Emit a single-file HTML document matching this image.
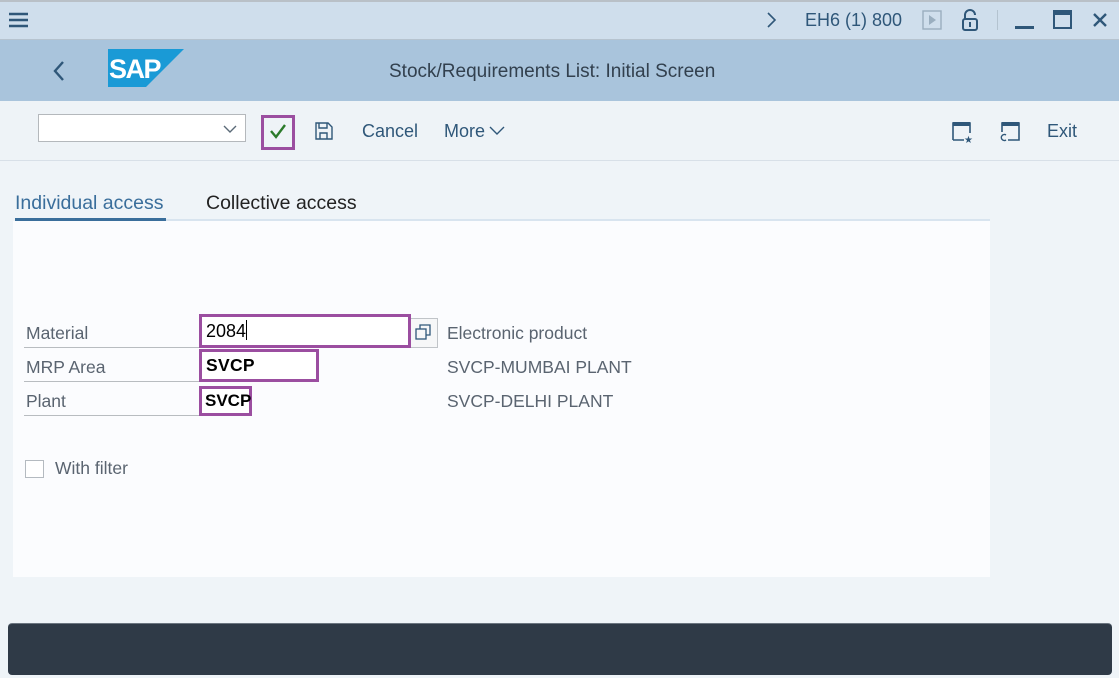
<!DOCTYPE html>
<html><head><style>
*{margin:0;padding:0;box-sizing:border-box}
body{width:1119px;height:678px;background:#eff4f8;font-family:"Liberation Sans",sans-serif;position:relative;overflow:hidden;color:#32363a}
.a{position:absolute}
.t{font-size:17px;color:#32363a;white-space:nowrap}
.lbl{font-size:17.5px;color:#5a6470;white-space:nowrap}
.in{position:absolute;border:3px solid #9b4ea0;background:#fff;font-size:17px;color:#000;padding-left:4px;line-height:25px}
.ul{position:absolute;height:1px;background:#b8bcc0}
</style></head><body>
<div class="a" style="left:0;top:0;width:1119px;height:40px;background:#cfdeec;border-top:2px solid #b9c0c7;border-bottom:1px solid #b6c3cf"></div>
<svg class="a" style="left:8px;top:12px" width="22" height="16"><path d="M1 2h19M1 8h19M1 14h19" stroke="#2f5779" stroke-width="2.4"/></svg>
<svg class="a" style="left:766px;top:11px" width="12" height="18"><path d="M2 2l7 7-7 7" stroke="#2f5779" stroke-width="1.6" fill="none"/></svg>
<div class="a t" style="left:805px;top:10px;color:#2f5779;font-size:18px">EH6 (1) 800</div>
<svg class="a" style="left:922px;top:10px" width="20" height="20"><rect x="1" y="1" width="18" height="18" fill="none" stroke="#9aaebf" stroke-width="1.4"/><path d="M7 5l7 5-7 5z" fill="#9aaebf"/></svg>
<svg class="a" style="left:961px;top:9px" width="18" height="22"><path d="M4 10V6a5 5 0 0 1 10 0" stroke="#2f5779" stroke-width="2" fill="none"/><rect x="2" y="10" width="14" height="11" rx="2" fill="none" stroke="#2f5779" stroke-width="2"/><rect x="8" y="13" width="2" height="5" fill="#2f5779"/></svg>
<div class="a" style="left:997px;top:10px;width:1px;height:20px;background:#b4c3d0"></div>
<div class="a" style="left:1015px;top:26px;width:19px;height:3px;background:#2f5779"></div>
<svg class="a" style="left:1053px;top:10px" width="20" height="20"><rect x="1" y="1" width="17" height="17" fill="none" stroke="#2f5779" stroke-width="2"/><rect x="1" y="1" width="17" height="4" fill="#2f5779"/></svg>
<svg class="a" style="left:1092px;top:12px" width="16" height="16"><path d="M2 2l12 12M14 2L2 14" stroke="#2f5779" stroke-width="2.4"/></svg>
<div class="a" style="left:0;top:40px;width:1119px;height:61px;background:#a9c4dc"></div>
<svg class="a" style="left:52px;top:60px" width="16" height="22"><path d="M11 2l-8 9 8 9" stroke="#2f5779" stroke-width="2.4" fill="none"/></svg>
<svg class="a" style="left:108px;top:49px" width="76" height="38"><path d="M0 0h76L38 38H0z" fill="#1a9ad6"/><text x="1" y="29" font-family="Liberation Sans" font-weight="bold" font-size="27" fill="#fff" letter-spacing="-1.5">SAP</text></svg>
<div class="a t" style="left:389px;top:61px;font-size:19px;color:#32404e">Stock/Requirements List: Initial Screen</div>
<div class="a" style="left:0;top:101px;width:1119px;height:60px;background:#eef3f7;border-bottom:1px solid #d8e0e8"></div>
<div class="a" style="left:38px;top:114px;width:208px;height:28px;background:#fff;border:1px solid #b4b8bc"></div>
<svg class="a" style="left:222px;top:124px" width="16" height="10"><path d="M2 2l6 6 6-6" stroke="#5a6a78" stroke-width="1.4" fill="none"/></svg>
<div class="a" style="left:261px;top:115px;width:34px;height:35px;border:3px solid #9b4ea0"></div>
<svg class="a" style="left:268px;top:121px" width="20" height="20"><path d="M3 10l5 6 9-12" stroke="#2b7a2b" stroke-width="2.4" fill="none"/></svg>
<svg class="a" style="left:315px;top:122px" width="18" height="18"><path d="M1 1h12l4 4v12H1z M4 1v5h8V1 M5 17v-6h7v6" fill="none" stroke="#2f5779" stroke-width="1.4"/></svg>
<div class="a t" style="left:362px;top:121px;color:#2f5779;font-size:18px">Cancel</div>
<div class="a t" style="left:444px;top:121px;color:#2f5779;font-size:18px">More</div>
<svg class="a" style="left:488px;top:125px" width="18" height="10"><path d="M2 2l7 7 7-7" stroke="#2f5779" stroke-width="1.4" fill="none"/></svg>
<svg class="a" style="left:952px;top:121px" width="22" height="22"><path d="M1 19V2h17v10 M1 19h11" stroke="#2f5779" stroke-width="1.6" fill="none"/><rect x="1" y="1" width="17" height="4" fill="#2f5779"/><text x="12" y="22" font-size="10" fill="#2f5779">★</text></svg>
<svg class="a" style="left:999px;top:121px" width="22" height="22"><path d="M3 11V2h17v17H9" stroke="#2f5779" stroke-width="1.6" fill="none"/><rect x="3" y="1" width="17" height="4" fill="#2f5779"/><path d="M7 14a3 3 0 1 0 0 5" stroke="#2f5779" stroke-width="1.4" fill="none"/></svg>
<div class="a t" style="left:1047px;top:121px;color:#2f5779;font-size:18px">Exit</div>
<div class="a t" style="left:15px;top:192px;color:#3a6e9b;font-size:19.5px">Individual access</div>
<div class="a t" style="left:206px;top:192px;color:#222;font-size:19.5px">Collective access</div>
<div class="a" style="left:15px;top:219px;width:975px;height:2px;background:#d8e4ef"></div>
<div class="a" style="left:15px;top:218px;width:151px;height:3px;background:#3a6e9b"></div>
<div class="a" style="left:13px;top:221px;width:977px;height:356px;background:#fbfcfe"></div>
<div class="a lbl" style="left:26px;top:323px">Material</div>
<div class="ul" style="left:24px;top:347px;width:176px"></div>
<div class="a lbl" style="left:26px;top:357px">MRP Area</div>
<div class="ul" style="left:24px;top:381px;width:176px"></div>
<div class="a lbl" style="left:26px;top:391px">Plant</div>
<div class="ul" style="left:24px;top:415px;width:176px"></div>
<div class="a" style="left:409px;top:318px;width:29px;height:30px;border:1px solid #c0c4c8;background:#f6f7f8"></div>
<svg class="a" style="left:414px;top:323px" width="18" height="18"><rect x="2" y="6" width="10" height="10" fill="none" stroke="#2f5779" stroke-width="1.3"/><path d="M6 6V2h10v10h-4" fill="none" stroke="#2f5779" stroke-width="1.3"/></svg>
<div class="in" style="left:199px;top:314px;width:212px;height:34px;padding-top:2px;font-size:18px">2084<span style="display:inline-block;width:1px;height:20px;background:#000;vertical-align:-3px"></span></div>
<div class="in" style="left:199px;top:349px;width:120px;height:33px;padding-top:1px;font-size:17.5px;font-weight:bold;letter-spacing:0.3px">SVCP</div>
<div class="in" style="left:199px;top:386px;width:53px;height:30px;line-height:24px;font-size:17px;font-weight:bold;padding-left:3px">SVCP</div>
<div class="a lbl" style="left:447px;top:323px">Electronic product</div>
<div class="a lbl" style="left:447px;top:357px">SVCP-MUMBAI PLANT</div>
<div class="a lbl" style="left:447px;top:391px">SVCP-DELHI PLANT</div>
<div class="a" style="left:25px;top:460px;width:19px;height:18px;border:1px solid #b4bac0;background:#fff"></div>
<div class="a lbl" style="left:55px;top:458px">With filter</div>
<div class="a" style="left:8px;top:623px;width:1104px;height:52px;background:#2f3a47;border-radius:4px;border-top:1px solid #6b7580"></div>
</body></html>
